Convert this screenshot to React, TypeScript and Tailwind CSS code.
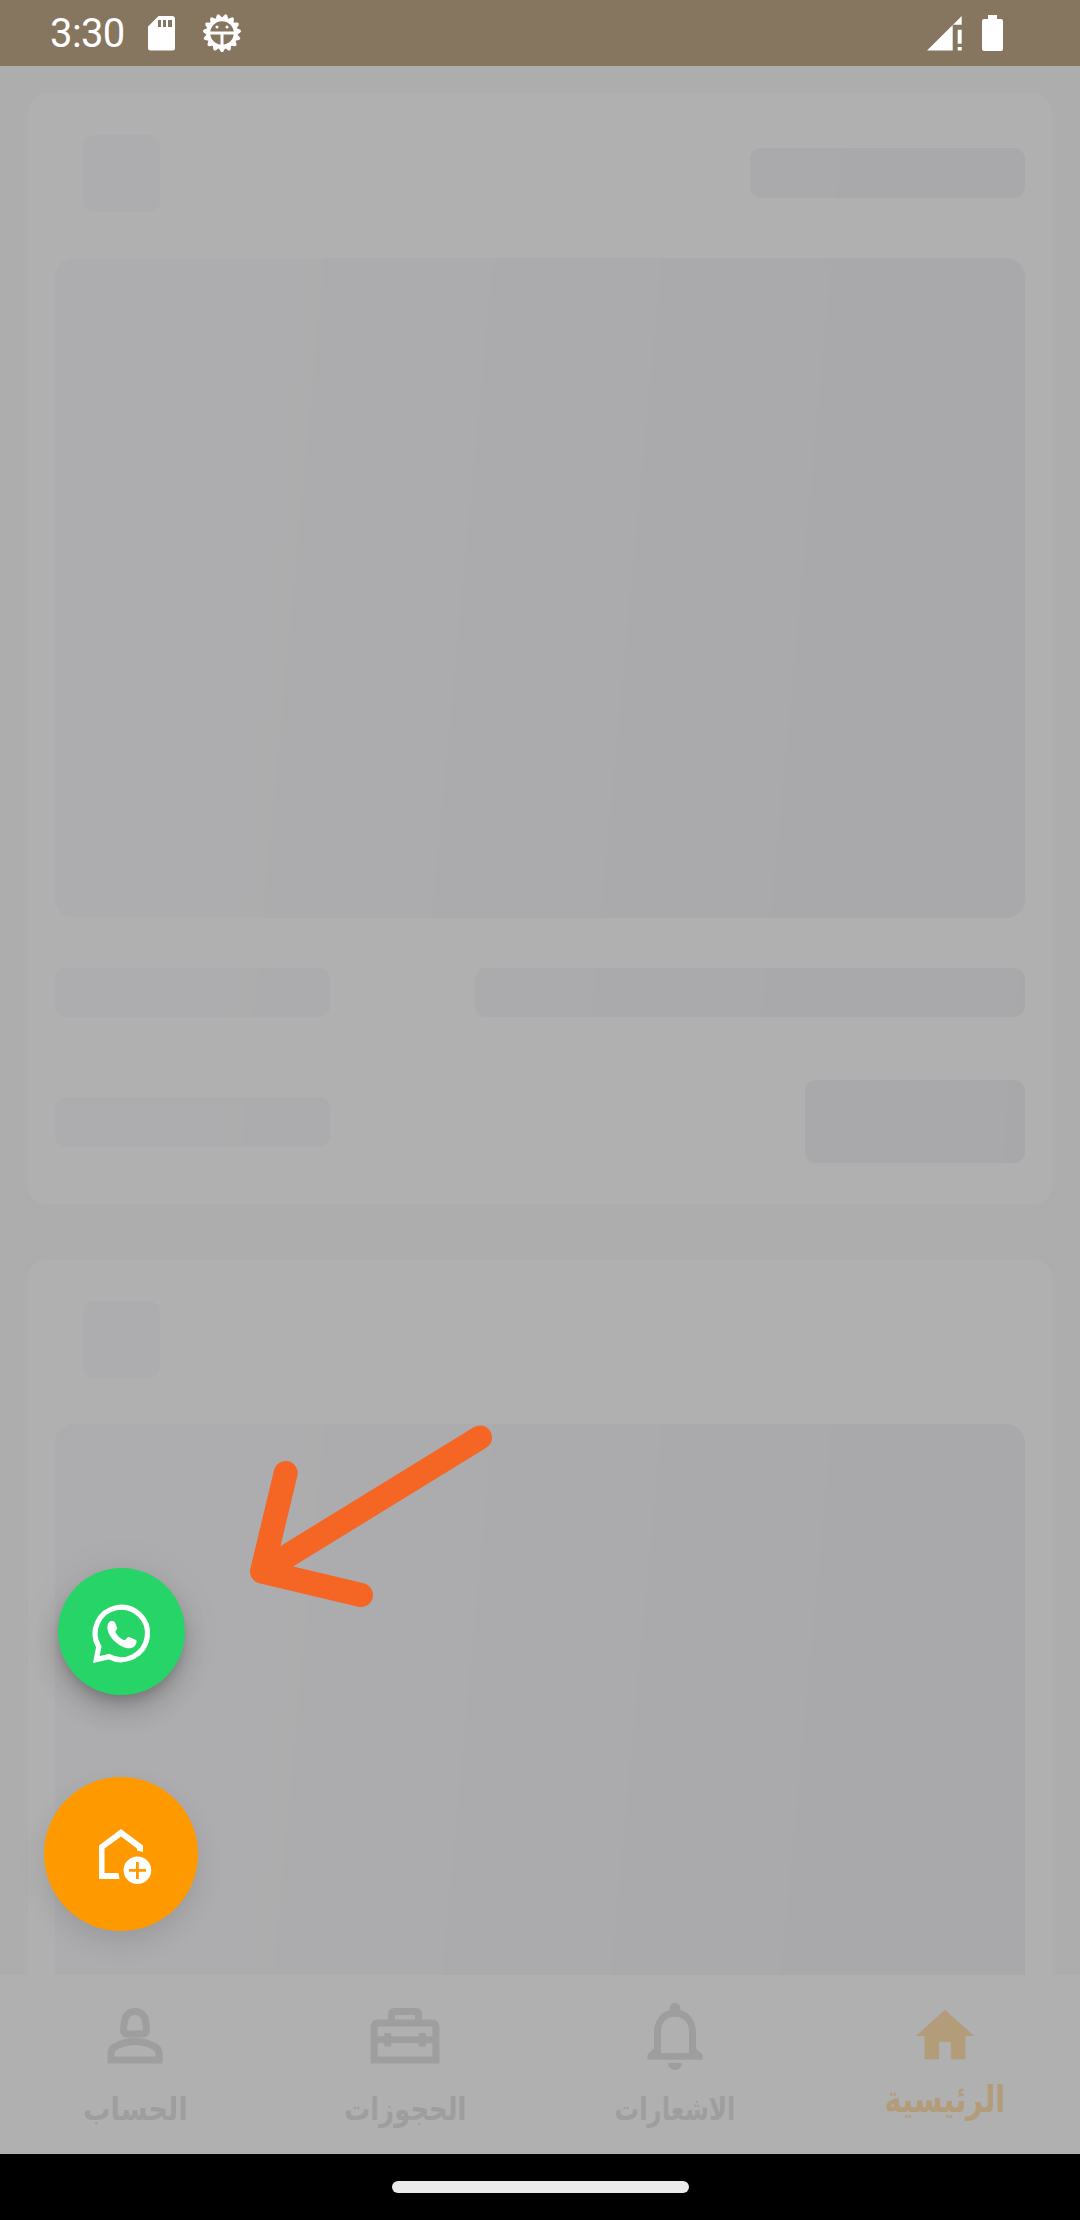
const shimmer =
  "bg-[linear-gradient(95.3deg,#adadaf_320px,#adadae_320px,#adadae_338px,#acacae_338px,#acacae_506px,#ababad_506px,#ababad_674px,#aaaaac_674px,#aaaaac_843px,#a9a9ab_843px,#a9a9ab_1096px,#a8a8aa_1096px)] bg-[size:1080px_1110px] bg-no-repeat";

const gearTeeth = Array.from({ length: 15 }, (_, i) => i * 24);

function StatusBar() {
  return (
    <header className="flex h-[66px] shrink-0 items-center bg-[#86755f] pl-[50px] pr-[77px] text-white">
      <span className="w-[75px] whitespace-nowrap pt-[2px] font-['Roboto'] text-[40px] leading-none tracking-[-0.6px]">3:30</span>
      <svg className="ml-[23px] h-[35px] w-[27px]" viewBox="0 0 27 35">
        <path fill="#fff" fillRule="evenodd" d="M10.500 0H24a3 3 0 013 3v29a2.500 2.500 0 01-2.500 2.500h-22A2.500 2.500 0 010 32V10.500zM10 4v7h3V4zM15 4v7h3V4zM20 4v7h4V4z" />
      </svg>
      <svg className="ml-[27px] h-[40px] w-[40px]" viewBox="-20 -20 40 40" fill="none" stroke="#fff">
        <circle r="13.800" strokeWidth="4" />
        {gearTeeth.map((angle) => (
          <path key={angle} d="M-3.300 15L-1.500 18.200Q0 20 1.500 18.200L3.300 15z" fill="#fff" stroke="none" transform={`rotate(${angle})`} />
        ))}
        <path strokeWidth="3" d="M-14 0H14M0 0V14" />
        <circle cx="-5" cy="-6" r="1.500" fill="#fff" stroke="none" />
        <circle cx="5" cy="-6" r="1.500" fill="#fff" stroke="none" />
      </svg>
      <svg className="ml-auto h-[35px] w-[35px]" viewBox="0 0 35 35" fill="#fff">
        <path d="M0 34.500L25.700 9V34.500zM26 8.800L34.700 0V8.800zM30.700 13.700h4v14h-4zM30.700 31h4v3.500h-4z" />
      </svg>
      <svg className="ml-[20px] h-[36px] w-[21px]" viewBox="0 0 21 36" fill="#fff">
        <path d="M6 0h9v4h4a2 2 0 012 2v28a2 2 0 01-2 2H2a2 2 0 01-2-2V6a2 2 0 012-2h4z" />
      </svg>
    </header>
  );
}

function SkeletonCard({ title }: { title: boolean }) {
  return (
    <section className="flex h-[1110px] w-[1024px] shrink-0 flex-col rounded-[18px] bg-[#b0b0b0] px-[27px] pt-[41px]">
      <div className="flex h-[77px] items-center justify-between pl-[28px]">
        <div className={`h-[77px] w-[77px] rounded-[11px] bg-[position:-83px_-41px] ${shimmer}`} />
        {title && <div className={`mb-px h-[50px] w-[275px] rounded-[11px] bg-[position:-750px_-54px] ${shimmer}`} />}
      </div>
      <div className={`mt-[46px] h-[660px] w-full shrink-0 rounded-[19px] bg-[position:-55px_-164px] ${shimmer}`} />
      <div className="mt-[50px] flex h-[49px] shrink-0 justify-between">
        <div className={`w-[275px] rounded-[11px] bg-[position:-55px_-874px] ${shimmer}`} />
        <div className={`w-[550px] rounded-[11px] bg-[position:-475px_-874px] ${shimmer}`} />
      </div>
      <div className="mt-[63px] flex h-[83px] shrink-0 items-center justify-between">
        <div className={`h-[50px] w-[275px] rounded-[11px] bg-[position:-55px_-1003px] ${shimmer}`} />
        <div className={`h-full w-[220px] rounded-[11px] bg-[position:-805px_-986px] ${shimmer}`} />
      </div>
    </section>
  );
}

function PersonIcon() {
  return (
    <svg className="h-[70px] w-[70px]" viewBox="0 0 70 70" fill="none" stroke="currentColor" strokeWidth="7">
      <path d="M35 10.500c-7 0-10 5-10.800 11.500l-.7 7c-.2 2.500 1.500 4 4 4h15c2.500 0 4.200-1.500 4-4l-.7-7C45 15.500 42 10.500 35 10.500z" />
      <path d="M11 59V52.500c0-3.500 1.500-5.500 4.500-7 5-2.700 12-5 19.500-5s14.500 2.300 19.500 5c3 1.500 4.500 3.500 4.500 7V59z" />
    </svg>
  );
}

function CaseIcon() {
  return (
    <svg className="h-[70px] w-[70px]" viewBox="0 0 70 70" fill="none" stroke="currentColor" strokeWidth="7">
      <path d="M4.100 59V26.500q0-4.500 4.500-4.500H61.400q4.500 0 4.500 4.500V59zM4 38.700H66M21.500 22V13.500q0-3 3-3h21q3 0 3 3V22" />
      <path d="M17.700 32V45.500M52.300 32V45.500" />
    </svg>
  );
}

function BellIcon() {
  return (
    <svg className="h-[70px] w-[70px]" viewBox="0 0 70 70" fill="currentColor">
      <path fillRule="evenodd" d="M29.800 9V6.900a5.200 5.200 0 0110.400 0V9C50 11.500 56 20.500 56 31.500V47.500l6 5.500q.6.700.6 1.500v4.300H7.500V54.500q0-.8.600-1.500L14 47.500V31.500C14 20.500 20 11.500 29.800 9zM21 52H49V31C49 21.500 43.500 15.800 35 15.800S21 21.500 21 31z" />
      <path d="M28 62H42a7 7 0 01-14 0z" />
    </svg>
  );
}

function HomeIcon() {
  return (
    <svg className="h-[70px] w-[70px]" viewBox="0 0 24 24" fill="currentColor">
      <path d="M10 20v-6h4v6h5v-8h3L12 3 2 12h3v8z" />
    </svg>
  );
}

function WhatsappIcon() {
  return (
    <svg className="h-[72px] w-[72px]" viewBox="0.500 0 72 72">
      <path
        fill="none"
        stroke="#fff"
        strokeWidth="5.200"
        strokeMiterlimit="8"
        d="M13.300 48.800A26.200 26.200 0 1123.600 58.600L10.800 61.500z"
      />
      <path
        fill="#fff"
        d="M22 28C22.200 25 24 23 26 23C28 23 29 23.300 29.700 25L31.700 30C32 31 30 33 29.700 33.700C31.500 37.500 35 41 39 42.300C40 42.200 41.500 39.500 42.700 39C43.500 38.700 50 41.500 51 42.500C51.500 47 48 50 44.500 50.300C40 50.800 33.500 47.500 28.500 42.700C24 38 21.500 33 22 28z"
      />
    </svg>
  );
}

const tabs = [
  { label: "الحساب", Icon: PersonIcon, width: "scale-x-[0.85]" },
  { label: "الحجوزات", Icon: CaseIcon, width: "scale-x-[0.81]" },
  { label: "الاشعارات", Icon: BellIcon, width: "scale-x-[0.765]" },
];

function BottomNav() {
  return (
    <nav className="grid h-[179px] shrink-0 grid-cols-4 bg-[#b0b0b0] pt-[26px] text-[#9e9e9e]">
      {tabs.map(({ label, Icon, width }) => (
        <div key={label} className="flex flex-col items-center">
          <Icon />
          <span dir="rtl" className={`mt-[14px] whitespace-nowrap font-['DejaVu_Sans',sans-serif] text-[32px] font-bold leading-[48px] ${width}`}>
            {label}
          </span>
        </div>
      ))}
      <div className="flex flex-col items-center text-[#b39c7a]">
        <HomeIcon />
        <span dir="rtl" className="mt-[5px] scale-x-[0.785] whitespace-nowrap font-['DejaVu_Sans',sans-serif] text-[37px] font-bold leading-[48px]">
          الرئيسية
        </span>
      </div>
    </nav>
  );
}

export default function App() {
  return (
    <div className="relative flex h-[2220px] w-[1080px] flex-col overflow-hidden bg-[#adadad]">
      <StatusBar />
      <main className="flex min-h-0 flex-1 flex-col items-center gap-[56px] overflow-hidden pt-[28px]">
        <SkeletonCard title />
        <SkeletonCard title={false} />
      </main>
      <BottomNav />
      <footer className="flex h-[66px] shrink-0 items-center justify-center bg-black">
        <div className="h-[12px] w-[297px] rounded-full bg-[#ebebeb]" />
      </footer>

      <svg className="absolute left-[240px] top-[1415px] h-[200px] w-[260px]" viewBox="240 1415 260 200" fill="none" stroke="#f56524" strokeWidth="24" strokeLinecap="round" strokeLinejoin="round">
        <path d="M480 1437.500L262 1571.500M285.700 1473L262 1571.500L361 1595" />
      </svg>

      <button className="absolute left-[58px] top-[1568px] flex h-[127px] w-[127px] items-center justify-center rounded-full bg-[#27d467] pt-[5px] shadow-[0_8px_14px_-3px_rgba(0,0,0,0.2),0_16px_28px_rgba(0,0,0,0.14),0_3px_50px_rgba(0,0,0,0.05)]">
        <WhatsappIcon />
      </button>

      <button className="absolute left-[44px] top-[1777px] h-[154px] w-[154px] rounded-full bg-[#ff9900] shadow-[0_12px_30px_-4px_rgba(0,0,0,0.13)]">
        <svg className="h-full w-full" viewBox="0 0 154 154">
          <path fill="#fff" d="M77 52L99 68.500V75l-6-1.500V71.500L77 59.500L60.500 71.500V96H74.500L75.500 102H55V68.500z" />
          <circle cx="93.400" cy="93.300" r="13.800" fill="#fff" />
          <path stroke="#ff9900" strokeWidth="2.800" d="M85 93.300H102M93.400 85V102" />
        </svg>
      </button>
    </div>
  );
}
